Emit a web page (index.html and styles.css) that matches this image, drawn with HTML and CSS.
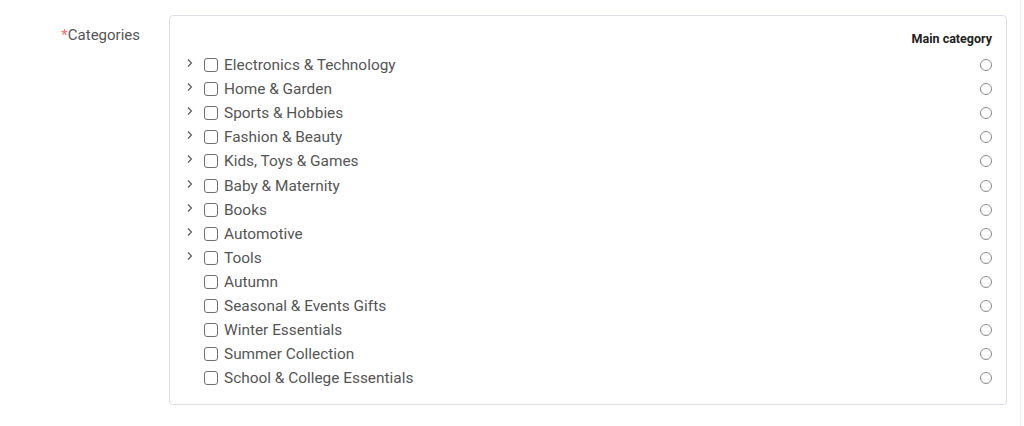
FILE: index.html
```html
<!DOCTYPE html>
<html>
<head>
<meta charset="utf-8">
<link rel="stylesheet" href="styles.css">
</head>
<body>
<div class="page">
  <div class="form-item">
    <label class="form-label"><span class="req">*</span>Categories</label>
    <div class="cat-box">
      <div class="cat-head">Main category</div>
      <ul class="cat-list">
        <li class="cat-row"><span class="chev"><svg width="8" height="10" viewBox="0 0 8 10"><path d="M2 1.5 L5.5 5 L2 8.5" fill="none" stroke="#555" stroke-width="1.1"/></svg></span><span class="cb"></span><span class="name">Electronics &amp; Technology</span><span class="radio"></span></li>
        <li class="cat-row"><span class="chev"><svg width="8" height="10" viewBox="0 0 8 10"><path d="M2 1.5 L5.5 5 L2 8.5" fill="none" stroke="#555" stroke-width="1.1"/></svg></span><span class="cb"></span><span class="name">Home &amp; Garden</span><span class="radio"></span></li>
        <li class="cat-row"><span class="chev"><svg width="8" height="10" viewBox="0 0 8 10"><path d="M2 1.5 L5.5 5 L2 8.5" fill="none" stroke="#555" stroke-width="1.1"/></svg></span><span class="cb"></span><span class="name">Sports &amp; Hobbies</span><span class="radio"></span></li>
        <li class="cat-row"><span class="chev"><svg width="8" height="10" viewBox="0 0 8 10"><path d="M2 1.5 L5.5 5 L2 8.5" fill="none" stroke="#555" stroke-width="1.1"/></svg></span><span class="cb"></span><span class="name">Fashion &amp; Beauty</span><span class="radio"></span></li>
        <li class="cat-row"><span class="chev"><svg width="8" height="10" viewBox="0 0 8 10"><path d="M2 1.5 L5.5 5 L2 8.5" fill="none" stroke="#555" stroke-width="1.1"/></svg></span><span class="cb"></span><span class="name">Kids, Toys &amp; Games</span><span class="radio"></span></li>
        <li class="cat-row"><span class="chev"><svg width="8" height="10" viewBox="0 0 8 10"><path d="M2 1.5 L5.5 5 L2 8.5" fill="none" stroke="#555" stroke-width="1.1"/></svg></span><span class="cb"></span><span class="name">Baby &amp; Maternity</span><span class="radio"></span></li>
        <li class="cat-row"><span class="chev"><svg width="8" height="10" viewBox="0 0 8 10"><path d="M2 1.5 L5.5 5 L2 8.5" fill="none" stroke="#555" stroke-width="1.1"/></svg></span><span class="cb"></span><span class="name">Books</span><span class="radio"></span></li>
        <li class="cat-row"><span class="chev"><svg width="8" height="10" viewBox="0 0 8 10"><path d="M2 1.5 L5.5 5 L2 8.5" fill="none" stroke="#555" stroke-width="1.1"/></svg></span><span class="cb"></span><span class="name">Automotive</span><span class="radio"></span></li>
        <li class="cat-row"><span class="chev"><svg width="8" height="10" viewBox="0 0 8 10"><path d="M2 1.5 L5.5 5 L2 8.5" fill="none" stroke="#555" stroke-width="1.1"/></svg></span><span class="cb"></span><span class="name">Tools</span><span class="radio"></span></li>
        <li class="cat-row"><span class="chev"></span><span class="cb"></span><span class="name">Autumn</span><span class="radio"></span></li>
        <li class="cat-row"><span class="chev"></span><span class="cb"></span><span class="name">Seasonal &amp; Events Gifts</span><span class="radio"></span></li>
        <li class="cat-row"><span class="chev"></span><span class="cb"></span><span class="name">Winter Essentials</span><span class="radio"></span></li>
        <li class="cat-row"><span class="chev"></span><span class="cb"></span><span class="name">Summer Collection</span><span class="radio"></span></li>
        <li class="cat-row"><span class="chev"></span><span class="cb"></span><span class="name">School &amp; College Essentials</span><span class="radio"></span></li>
      </ul>
    </div>
  </div>
</div>
</body>
</html>
```
FILE: styles.css
```css
html, body {
  margin: 0;
  padding: 0;
  background: #fff;
}
body {
  font-family: Roboto, "Liberation Sans", Arial, sans-serif;
  color: #555;
}
.page {
  width: 1020px;
  height: 426px;
  border-right: 1px solid #ededed;
}
.form-item {
  display: flex;
  align-items: flex-start;
  padding-top: 15px;
}
.form-label {
  width: 140px;
  box-sizing: border-box;
  text-align: right;
  font-size: 15px;
  line-height: 20px;
  padding-top: 10px;
  margin-right: 29px;
  color: #555;
}
.req {
  color: #f56c6c;
}
.cat-box {
  width: 838px;
  height: 390px;
  box-sizing: border-box;
  border: 1px solid #dcdfe6;
  border-radius: 4px;
  padding: 15px 14px 15px 16px;
}
.cat-head {
  text-align: right;
  font-size: 12.5px;
  font-weight: 700;
  color: #222;
  line-height: 16px;
  margin-bottom: 6px;
}
.cat-list {
  list-style: none;
  margin: 0;
  padding: 0;
}
.cat-row {
  display: flex;
  align-items: center;
  height: 24.1px;
  font-size: 15.4px;
}
.chev {
  width: 18px;
  height: 24px;
  display: flex;
  align-items: center;
  justify-content: flex-start;
  margin-top: -4px;
}
.cb {
  width: 14px;
  height: 14px;
  box-sizing: border-box;
  border: 1px solid #707070;
  border-radius: 3px;
  margin-right: 6px;
}
.name {
  flex: 1;
  color: #555;
}
.radio {
  width: 12px;
  height: 12px;
  box-sizing: border-box;
  border: 1px solid #8a8a8a;
  border-radius: 50%;
}
```
